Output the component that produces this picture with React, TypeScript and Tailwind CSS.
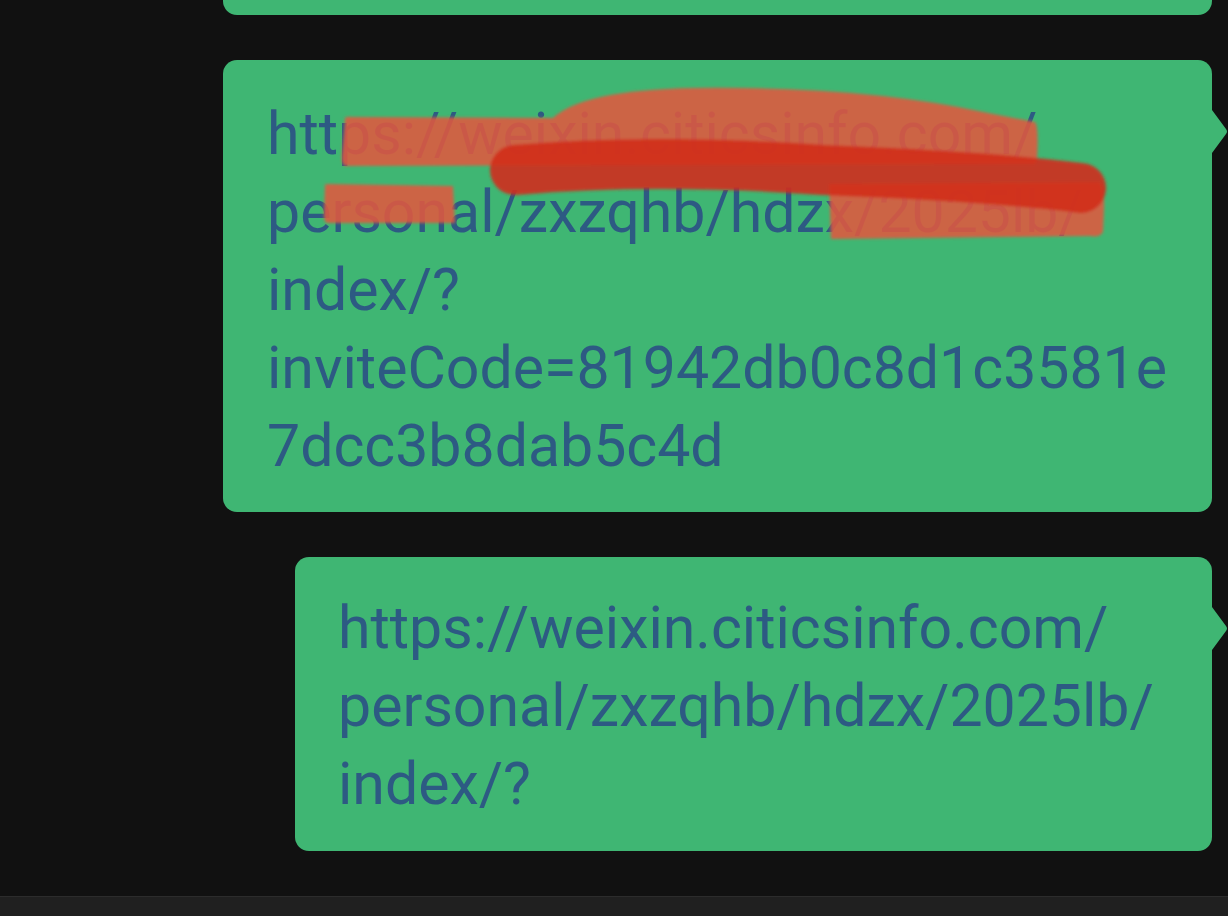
import React from 'react';

const Tail = () => (
  <svg className="absolute left-full top-[50px]" width="16" height="43" viewBox="0 0 16 43">
    <path d="M0 0 L14 19 Q16 21.5 14 24 L0 43 Z" fill="#3fb673" />
  </svg>
);

const Scribble = () => (
  <svg className="absolute left-0 top-0 pointer-events-none" width="989" height="452" viewBox="0 0 989 452">
    <defs>
      <filter id="soft" x="-5%" y="-20%" width="110%" height="140%">
        <feGaussianBlur stdDeviation="1.8" />
      </filter>
    </defs>
    <g filter="url(#soft)">
      <g fill="#e0593e" fillOpacity="0.88">
        {/* upper band with hump */}
        <path d="M122 60 Q120 56 130 57 L330 58 Q360 30 470 28 Q640 26 760 52 L812 62 Q816 66 814 100 L812 104 L122 106 Q118 104 119 95 Z" />
        {/* lower left */}
        <path d="M102 126 Q100 124 106 124 L230 126 L232 163 L104 163 Q100 162 101 150 Z" />
        {/* lower right box */}
        <path d="M606 124 L876 122 Q882 126 881 150 L880 172 Q876 178 868 176 L608 179 Z" />
      </g>
      <path d="M292 110 Q430 98 600 110 Q760 116 858 128" stroke="#d02e1c" strokeOpacity="0.9" strokeWidth="50" strokeLinecap="round" fill="none" />
    </g>
  </svg>
);

const lineCls = 'whitespace-nowrap';

export default function App() {
  return (
    <div
      className="flex h-[916px] w-full flex-col bg-[#111111] text-[#2d5a83]"
      style={{ fontFamily: 'Roboto, "Noto Sans", sans-serif' }}
    >
      <div className="flex flex-1 flex-col items-end pr-[16px]">
        <div className="h-[15px] w-[989px] rounded-b-[14px] bg-[#3fb673]" />

        <div className="relative mt-[45px] h-[452px] w-[989px] rounded-[14px] bg-[#3fb673] pl-[44px] pt-[35px] text-[59px] leading-[78px]">
          <div className={lineCls}>https://weixin.citicsinfo.com/</div>
          <div className={lineCls}>personal/zxzqhb/hdzx/2025lb/</div>
          <div className={lineCls}>index/?</div>
          <div className={lineCls}>inviteCode=81942db0c8d1c3581e</div>
          <div className={lineCls}>7dcc3b8dab5c4d</div>
          <Scribble />
          <Tail />
        </div>

        <div className="relative mt-[45px] h-[294px] w-[917px] rounded-[14px] bg-[#3fb673] pl-[43px] pt-[32px] text-[59px] leading-[78px]">
          <div className={lineCls}>https://weixin.citicsinfo.com/</div>
          <div className={lineCls}>personal/zxzqhb/hdzx/2025lb/</div>
          <div className={lineCls}>index/?</div>
          <Tail />
        </div>
      </div>
      <div className="h-[20px] border-t border-[#2c2c2c] bg-[#202020]" />
    </div>
  );
}
